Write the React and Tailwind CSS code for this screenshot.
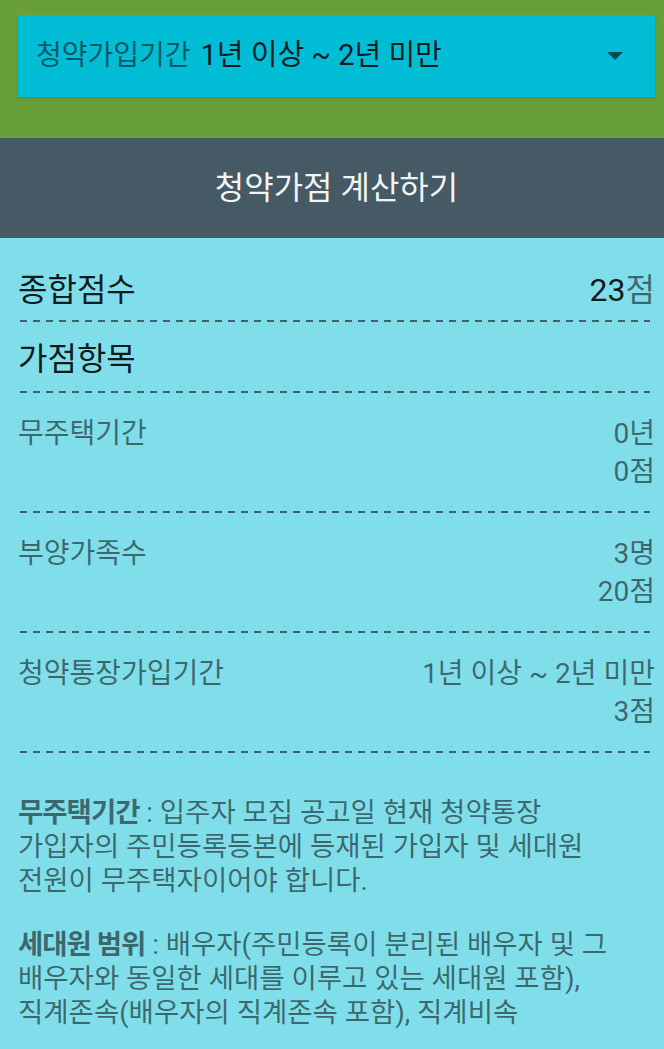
import React from "react";

const FONT = "font-['Roboto','Noto_Sans_CJK_KR',sans-serif]";

function Dashed() {
  return (
    <div className="mr-[5px] ml-[2px] h-[2px] bg-[repeating-linear-gradient(to_right,rgba(0,0,0,0.55)_0_7px,transparent_7px_13px)]" />
  );
}

function ScoreItem({ label, value, points }) {
  return (
    <>
      <div className="flex justify-between pt-[22px] pb-[20px] text-[28px] leading-[38px] text-black/55">
        <div>{label}</div>
        <div className="flex flex-col items-end">
          <div>{value}</div>
          <div>{points}</div>
        </div>
      </div>
      <Dashed />
    </>
  );
}

export default function App() {
  return (
    <div className={`${FONT} min-h-screen bg-[#80deea]`}>
      {/* period selector */}
      <div className="h-[138px] bg-[#689f38] pl-[18px] pr-[9px] pt-[15px]">
        <div className="flex h-[82px] items-center bg-[#00bcd4] pl-[18px] pr-[32px] shadow-[0_2px_3px_rgba(0,0,0,0.12)]">
          <span className="text-[28px] text-black/55">청약가입기간</span>
          <span className="ml-[10px] text-[29px] text-black/85">1년 이상 ~ 2년 미만</span>
          <svg className="ml-auto" width="16" height="8" viewBox="0 0 16 8">
            <path d="M0 0 L16 0 L8 8 Z" fill="rgba(0,0,0,0.6)" />
          </svg>
        </div>
      </div>

      {/* calculate button */}
      <div className="flex h-[100px] items-center justify-center bg-[#455a64] pl-[9px]">
        <span className="text-[32px] text-white/95">청약가점 계산하기</span>
      </div>

      {/* results */}
      <div className="pl-[18px] pr-[9px]">
        <div className="flex items-center justify-between pt-[32px] pb-[10px] text-[32px] leading-[40px] text-black/90">
          <span>종합점수</span>
          <span>
            23<span className="text-black/55">점</span>
          </span>
        </div>
        <Dashed />
        <div className="pt-[17px] pb-[12px] text-[32px] leading-[40px] text-black/90">가점항목</div>
        <Dashed />

        <ScoreItem label="무주택기간" value="0년" points="0점" />
        <ScoreItem label="부양가족수" value="3명" points="20점" />
        <ScoreItem label="청약통장가입기간" value="1년 이상 ~ 2년 미만" points="3점" />

        <div className="mt-[43px] text-[27.5px] leading-[34px] text-black/55">
          <p>
            <span className="font-bold tracking-[-1px]">무주택기간</span> : 입주자 모집 공고일 현재 청약통장
            <br />
            가입자의 주민등록등본에 등재된 가입자 및 세대원
            <br />
            전원이 무주택자이어야 합니다.
          </p>
          <p className="mt-[30px]">
            <span className="font-bold tracking-[-1px]">세대원 범위</span> : 배우자(주민등록이 분리된 배우자 및 그
            <br />
            배우자와 동일한 세대를 이루고 있는 세대원 포함),
            <br />
            직계존속(배우자의 직계존속 포함), 직계비속
          </p>
        </div>
      </div>
    </div>
  );
}
